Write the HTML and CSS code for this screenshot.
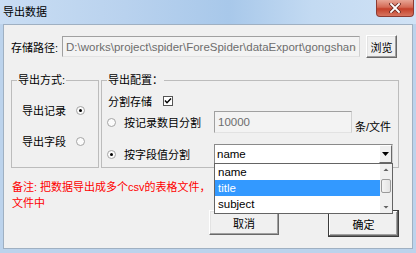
FILE: index.html
```html
<!DOCTYPE html>
<html lang="zh-CN">
<head>
    <meta charset="UTF-8">
    <title>导出数据</title>
    <link rel="stylesheet" href="styles.css">
</head>
<body>
    <div class="window">
        <!-- title bar -->
        <div class="titlebar">
            <span class="title">导出数据</span>
            <span class="close-btn">
                <svg width="12" height="10" viewBox="0 0 12 10">
                    <path d="M2 1 L10 9 M10 1 L2 9" stroke="#6b2a22" stroke-width="3.4" stroke-linecap="square"/>
                    <path d="M2 1 L10 9 M10 1 L2 9" stroke="#fff" stroke-width="1.8" stroke-linecap="square"/>
                </svg>
            </span>
        </div>

        <div class="client">
            <div class="path-row">
                <span class="path-label">存储路径:</span>
                <input class="field path-input" type="text" value="D:\works\project\spider\ForeSpider\dataExport\gongshang" readonly>
                <button class="btn btn-browse">浏览</button>
            </div>

            <div class="groups">
                <fieldset class="group group-mode">
                    <legend>导出方式:</legend>
                    <div class="mode-body">
                        <div class="mode-row"><span>导出记录</span><span class="radio checked"></span></div>
                        <div class="mode-row"><span>导出字段</span><span class="radio"></span></div>
                    </div>
                </fieldset>

                <fieldset class="group group-config">
                    <legend>导出配置：</legend>
                    <div class="config-body">
                        <div class="split-row">
                            <span class="split-label">分割存储</span>
                            <svg class="checkbox" width="10" height="10" viewBox="0 0 10 10">
                                <rect x="0.5" y="0.5" width="9" height="9" fill="#fff" stroke="#555"/>
                                <path d="M2 4.5 L4 6.8 L8 2.5" fill="none" stroke="#000" stroke-width="1.4"/>
                            </svg>
                        </div>
                        <div class="opt-row opt-count">
                            <span class="radio"></span>
                            <span class="opt-label">按记录数目分割</span>
                            <input class="field count-input" type="text" value="10000" readonly>
                            <span class="unit">条/文件</span>
                        </div>
                        <div class="opt-row opt-field">
                            <span class="radio checked"></span>
                            <span class="opt-label">按字段值分割</span>
                            <div class="combo">
                                <span class="combo-value">name</span>
                                <span class="combo-arrow">
                                    <svg width="7" height="4" viewBox="0 0 7 4"><path d="M0 0 H7 L3.5 4 Z" fill="#000"/></svg>
                                </span>
                                <div class="dropdown">
                                    <ul class="dropdown-list">
                                        <li>name</li>
                                        <li class="selected">title</li>
                                        <li>subject</li>
                                    </ul>
                                    <div class="scrollbar">
                                        <svg class="sb-arrow" width="12" height="12" viewBox="0 0 12 12"><path d="M3.5 7 L6 4.5 L8.5 7 Z" fill="#606060"/></svg>
                                        <span class="sb-thumb"></span>
                                        <svg class="sb-arrow sb-down" width="12" height="12" viewBox="0 0 12 12"><path d="M3.5 5 L6 7.5 L8.5 5 Z" fill="#606060"/></svg>
                                    </div>
                                </div>
                            </div>
                        </div>
                    </div>
                </fieldset>
            </div>

            <p class="note">备注: 把数据导出成多个csv的表格文件，<br>文件中</p>

            <div class="actions">
                <button class="btn btn-action">取消</button>
                <button class="btn btn-action btn-default">确定</button>
            </div>
        </div>
    </div>
</body>
</html>
```

FILE: styles.css
```css
body {
    margin: 0;
    background: #bcd3ec;
    font-family: "Liberation Sans", "Noto Sans CJK SC", sans-serif;
    font-size: 11px;
    color: #000;
}
.window {
    width: 416px;
    height: 253px;
    display: flex;
    flex-direction: column;
}

/* title bar */
.titlebar {
    height: 24px;
    flex: none;
    display: flex;
    justify-content: space-between;
    align-items: flex-start;
    background: linear-gradient(90deg, #c9ddf3 0%, #b9d2ee 30%, #a8c8ea 55%, #c3daf2 75%, #d0e2f5 100%);
}
.title {
    padding: 5px 0 0 3px;
    line-height: 14px;
}
.close-btn {
    width: 38px;
    height: 17px;
    margin-right: 2px;
    box-sizing: border-box;
    border: 1px solid #8c3b32;
    border-top: none;
    border-radius: 0 0 4px 4px;
    background: linear-gradient(#e8a595, #d46a55 45%, #c4402a 55%, #d77560);
    display: flex;
    align-items: center;
    justify-content: center;
}

/* client area */
.client {
    flex: 1;
    margin: 0 3px 4px;
    background: #f0f0f0;
    border: 1px solid #9fb0c2;
}
.field {
    box-sizing: border-box;
    margin: 0;
    border: 1px solid;
    border-color: #a0a0a0 #d0d0d0 #e2e2e2 #a0a0a0;
    background: #f3f3f3;
    color: #6d6d6d;
    font-family: inherit;
    outline: none;
}
.btn {
    box-sizing: border-box;
    margin: 0;
    padding: 0;
    font-family: inherit;
    font-size: 11px;
    color: #000;
    background: #f0f0f0;
    border: 1px solid;
    border-color: #fff #696969 #696969 #fff;
    box-shadow: inset -1px -1px #a0a0a0, inset 1px 1px #e3e3e3;
}

.path-row {
    display: flex;
    align-items: center;
    height: 23px;
    margin: 10px 0 0 7px;
}
.path-label {
    width: 51px;
}
.path-input {
    width: 298px;
    height: 21px;
    padding: 0 3px;
    font-size: 11.5px;
}
.btn-browse {
    width: 31px;
    height: 23px;
    margin-left: 6px;
}

/* group boxes */
.groups {
    display: flex;
    gap: 2px;
    margin: 15px 0 0 7px;
}
.group {
    margin: 0;
    padding: 0;
    box-sizing: border-box;
    border: 1px solid #bcbcbc;
}
.group legend {
    margin-left: 5px;
    padding: 0 1px;
    line-height: 14px;
}
.group-mode {
    width: 88px;
}
.mode-body {
    display: flex;
    flex-direction: column;
    gap: 15px;
    padding: 15px 0 0 10px;
}
.mode-row {
    display: flex;
    align-items: center;
    height: 16px;
}
.mode-row .radio {
    margin-left: 10px;
}
.radio {
    width: 9px;
    height: 9px;
    box-sizing: border-box;
    border: 1px solid #a4a4a4;
    border-radius: 50%;
    background: #fbfbfb;
    flex: none;
    display: flex;
    align-items: center;
    justify-content: center;
}
.radio.checked::after {
    content: "";
    width: 3px;
    height: 3px;
    border-radius: 50%;
    background: #000;
}

.group-config {
    width: 298px;
}
.config-body {
    padding: 6px 0 3px 5px;
}
.split-row {
    display: flex;
    align-items: center;
    height: 16px;
}
.split-label {
    margin-left: 1px;
}
.checkbox {
    margin-left: 11px;
}
.opt-row {
    display: flex;
    align-items: center;
}
.opt-count {
    height: 22px;
    margin-top: 2px;
}
.opt-field {
    height: 20px;
    margin-top: 11px;
}
.opt-row .radio {
    margin-right: 8px;
}
.opt-label {
    width: 90px;
}
.count-input {
    width: 138px;
    height: 22px;
    padding: 0 3px;
    font-size: 11.5px;
}
.unit {
    align-self: flex-end;
    margin: 0 0 -1px 3px;
    line-height: 14px;
}

/* combo box */
.combo {
    position: relative;
    width: 179px;
    height: 20px;
    box-sizing: border-box;
    border: 1px solid;
    border-color: #8a8a8a #cfcfcf #cfcfcf #8a8a8a;
    background: #fff;
    display: flex;
    align-items: center;
    justify-content: space-between;
}
.combo-value {
    padding-left: 2px;
    font-size: 11.5px;
}
.combo-arrow {
    width: 13px;
    height: 18px;
    box-sizing: border-box;
    border: 1px solid;
    border-color: #fff #696969 #696969 #fff;
    background: #f0f0f0;
    display: flex;
    align-items: center;
    justify-content: center;
}
.dropdown {
    position: absolute;
    top: 100%;
    left: -1px;
    width: 179px;
    height: 51px;
    box-sizing: border-box;
    border: 1px solid #646464;
    background: #fff;
    display: flex;
    z-index: 10;
}
.dropdown-list {
    flex: 1;
    margin: 0;
    padding: 0;
    list-style: none;
}
.dropdown-list li {
    height: 16px;
    line-height: 16px;
    padding-left: 3px;
    font-size: 11.5px;
}
.dropdown-list li.selected {
    background: #3399ff;
    color: #fff;
}
.scrollbar {
    width: 12px;
    background: #f0f0f0;
    display: flex;
    flex-direction: column;
    align-items: center;
}
.sb-thumb {
    width: 10px;
    height: 14px;
    margin-top: 3px;
    box-sizing: border-box;
    border: 1px solid #9a9a9a;
    border-radius: 2px;
    background: linear-gradient(90deg, #f4f4f4, #e4e4e4);
}
.sb-down {
    margin-top: auto;
}

.note {
    margin: 11px 0 0 8px;
    color: #ff0000;
    line-height: 16px;
}

.actions {
    display: flex;
    justify-content: flex-end;
    align-items: flex-start;
    gap: 49px;
    margin-top: -1px;
    padding-right: 13px;
}
.btn-action {
    width: 70px;
    height: 25px;
}
.btn-default {
    width: 71px;
    height: 27px;
    outline: 1px solid #3c3c3c;
    outline-offset: -1px;
    border-color: #3c3c3c;
    box-shadow: inset -1px -1px #696969, inset 1px 1px #fff, inset -2px -2px #a0a0a0;
}
```
